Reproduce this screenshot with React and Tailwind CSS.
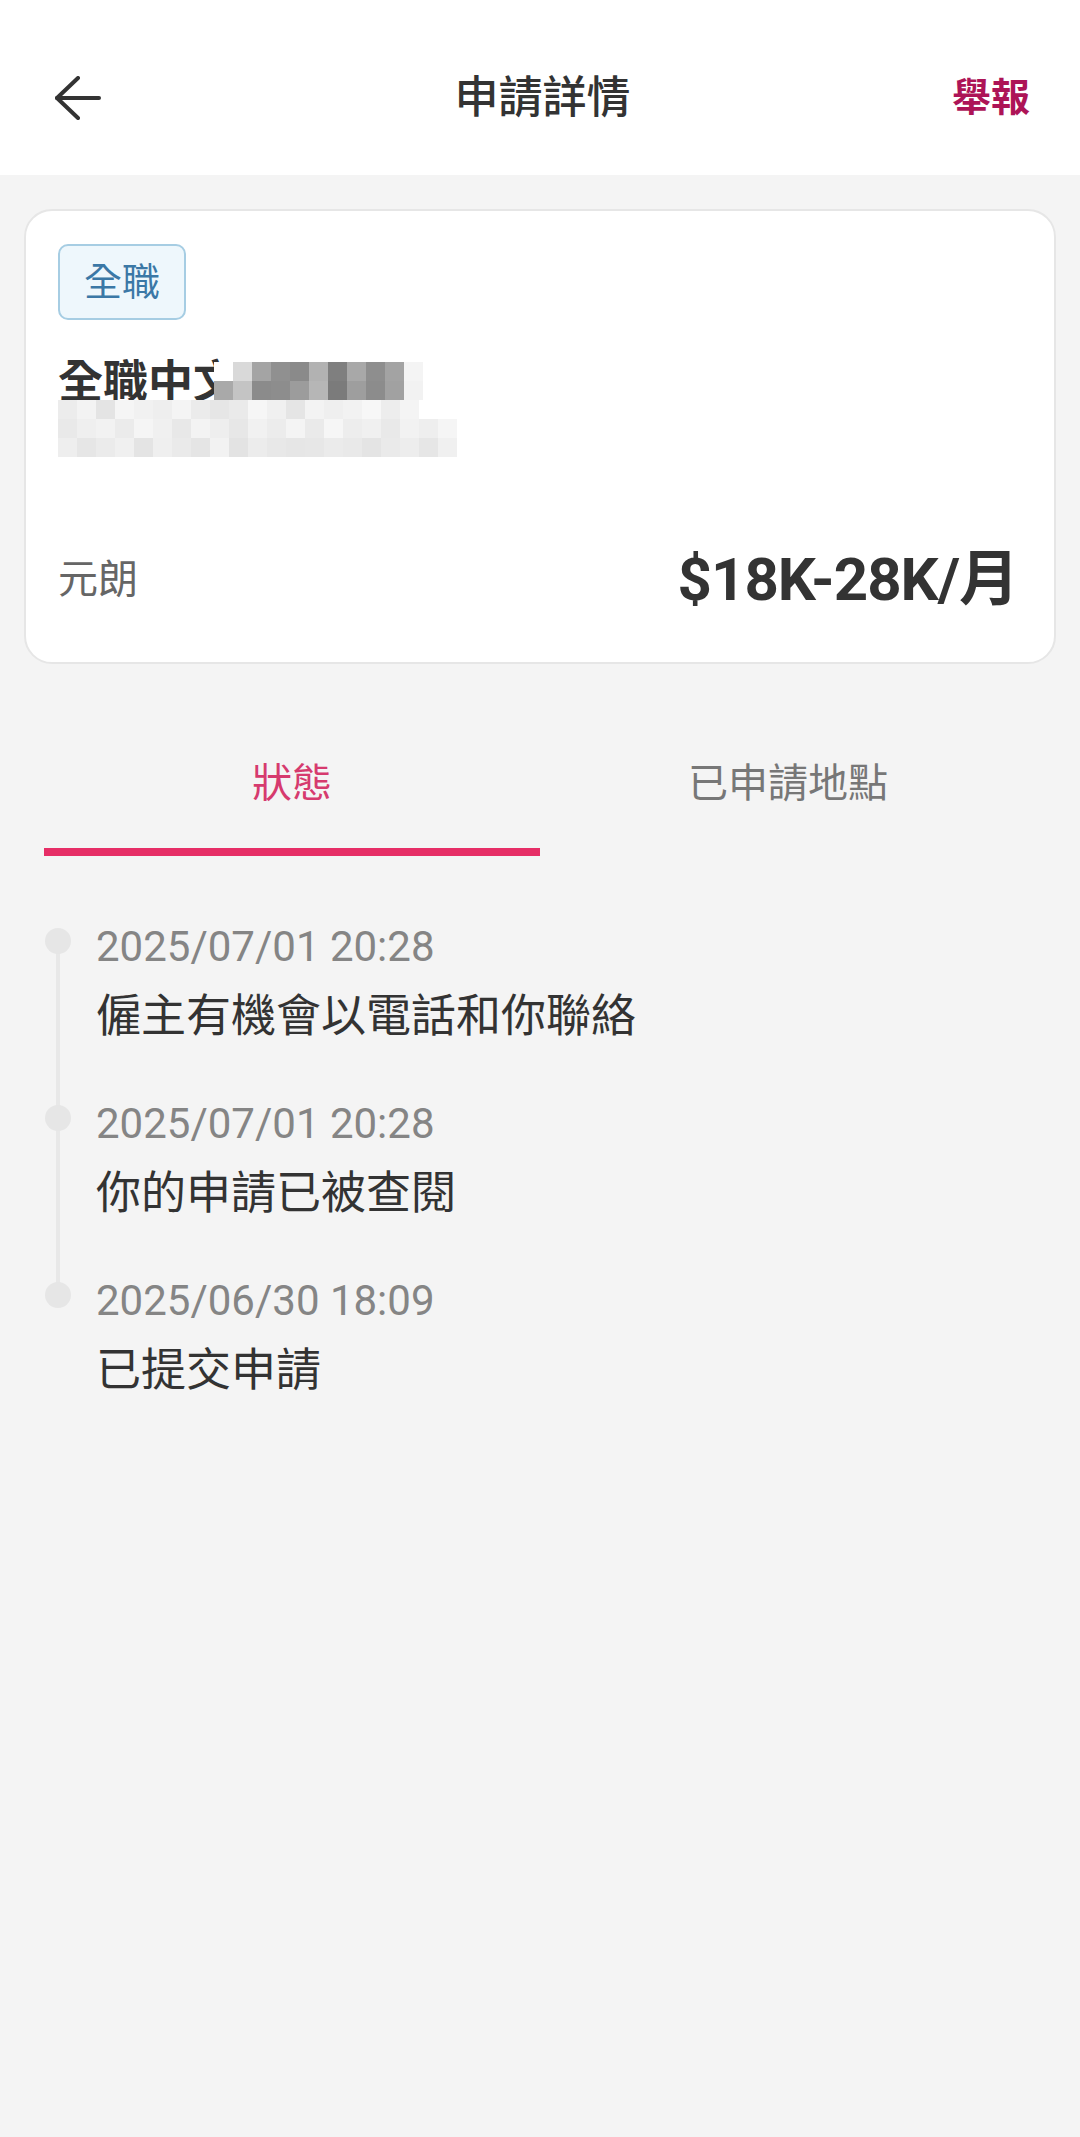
import React, { useState } from "react";

// 狀態時間線
const EVENTS = [
    { time: "2025/07/01 20:28", text: "僱主有機會以電話和你聯絡" },
    { time: "2025/07/01 20:28", text: "你的申請已被查閱" },
    { time: "2025/06/30 18:09", text: "已提交申請" },
];

// 打格仔 (mosaic) shades
const TOP_ROWS = [
    ["bg-white", "bg-[#d9d9d9]", "bg-[#a4a4a4]", "bg-[#909090]", "bg-[#8a8a8a]", "bg-[#b2b2b2]", "bg-[#7f7f7f]", "bg-[#a8a8a8]", "bg-[#8e8e8e]", "bg-[#a3a3a3]", "bg-[#f4f4f4]"],
    ["bg-[#a9a9a9]", "bg-[#c4c4c4]", "bg-[#8b8b8b]", "bg-[#8d8d8d]", "bg-[#9c9c9c]", "bg-[#b6b6b6]", "bg-[#7b7b7b]", "bg-[#9e9e9e]", "bg-[#8c8c8c]", "bg-[#a1a1a1]", "bg-[#f2f2f2]"],
];
const BOTTOM_ROWS = [
    ["bg-[#ececec]", "bg-[#f3f3f3]", "bg-[#e4e4e4]", "bg-[#f5f5f5]", "bg-[#f1f1f1]", "bg-[#eeeeee]", "bg-[#f4f4f4]", "bg-[#ebebeb]", "bg-[#e6e6e6]", "bg-[#eaeaea]", "bg-[#f6f6f6]", "bg-[#f0f0f0]", "bg-[#e5e5e5]", "bg-[#f3f3f3]", "bg-[#efefef]", "bg-[#f2f2f2]", "bg-[#f7f7f7]", "bg-[#ededed]", "bg-[#f4f4f4]", "bg-white", "bg-white"],
    ["bg-[#e9e9e9]", "bg-[#efefef]", "bg-[#f2f2f2]", "bg-[#ebebeb]", "bg-[#f5f5f5]", "bg-[#f0f0f0]", "bg-[#e8e8e8]", "bg-[#f3f3f3]", "bg-[#eeeeee]", "bg-[#e7e7e7]", "bg-[#f1f1f1]", "bg-[#ececec]", "bg-[#f4f4f4]", "bg-[#eaeaea]", "bg-[#f6f6f6]", "bg-[#ededed]", "bg-[#f0f0f0]", "bg-[#e9e9e9]", "bg-[#f2f2f2]", "bg-[#eeeeee]", "bg-[#f5f5f5]"],
    ["bg-[#eeeeee]", "bg-[#e6e6e6]", "bg-[#ebebeb]", "bg-[#f0f0f0]", "bg-[#e4e4e4]", "bg-[#efefef]", "bg-[#eaeaea]", "bg-[#e5e5e5]", "bg-[#f2f2f2]", "bg-[#e3e3e3]", "bg-[#ececec]", "bg-[#e8e8e8]", "bg-[#e6e6e6]", "bg-[#e7e7e7]", "bg-[#ebebeb]", "bg-[#e9e9e9]", "bg-[#e4e4e4]", "bg-[#eaeaea]", "bg-[#ededed]", "bg-[#e6e6e6]", "bg-[#f0f0f0]"],
];

function Mosaic({ rows, className }) {
    return (
        <div className={className}>
            {rows.map((row, r) => (
                <div key={r} className="flex">
                    {row.map((c, i) => <div key={i} className={`h-[19px] w-[19px] ${c}`}/>)}
                </div>
            ))}
        </div>
    );
}

export default function App() {
    const [tab, setTab] = useState(0);

    return (
        <div className="min-h-screen bg-[#f4f4f4] font-[Roboto,'Noto_Sans_CJK_TC',sans-serif] text-[#333333]">
            {/* Header */}
            <div className="flex h-[175px] items-center bg-white pl-[55px] pr-[50px] pt-[20px]">
                <div className="w-[200px]">
                    <button className="flex h-[46px] w-[46px] items-center">
                        <svg width="46" height="44" viewBox="0 0 46 44" fill="none" stroke="#333333" strokeWidth="4" strokeLinecap="round" strokeLinejoin="round">
                            <path d="M23 2 L2 22 L23 42"/>
                            <path d="M2 22 H44"/>
                        </svg>
                    </button>
                </div>
                <h1 className="flex-1 text-center text-[44px] font-medium leading-[56px] text-[#333333]">申請詳情</h1>
                <div className="flex w-[200px] justify-end">
                    <button className="text-[39px] font-bold leading-[56px] text-[#ad1457]">舉報</button>
                </div>
            </div>

            {/* Job card */}
            <div className="mx-[24px] mt-[34px] rounded-[28px] border-2 border-[#e6e6e6] bg-white pb-[50px] pl-[32px] pr-[36px] pt-[33px]">
                <div className="flex h-[76px] w-[128px] items-center justify-center rounded-[10px] border-2 border-[#a6cde3] bg-[#eef7fc] text-[38px] text-[#3b78a6]">全職</div>
                <div className="relative mt-[37px] h-[104px]">
                    <div className="text-[45px] font-bold leading-[52px] text-[#333333]">全職中文</div>
                    <Mosaic rows={TOP_ROWS} className="absolute left-[156px] top-[5px]"/>
                    <Mosaic rows={BOTTOM_ROWS} className="absolute left-[0px] top-[43px]"/>
                </div>
                <div className="mt-[87px] flex items-center justify-between">
                    <span className="text-[40px] leading-[64px] text-[#666666]">元朗</span>
                    <span className="text-[60px] font-bold leading-[64px] tracking-[-1px] text-[#333333]">$18K-28K/月</span>
                </div>
            </div>

            {/* Tabs */}
            <div className="mx-[44px] mt-[92px] flex">
                {["狀態", "已申請地點"].map((t, i) => (
                    <button key={t} onClick={() => setTab(i)} className="flex w-1/2 flex-col items-center">
                        <span className={`text-[40px] leading-[56px] ${tab === i ? "text-[#d63a6e]" : "text-[#777777]"}`}>{t}</span>
                        <span className={`mt-[36px] h-[8px] w-full ${tab === i ? "bg-[#e62e66]" : "bg-transparent"}`}/>
                    </button>
                ))}
            </div>

            {/* Timeline */}
            <div className="pl-[45px] pt-[66px]">
                {EVENTS.map((e, i) => (
                    <div key={i} className="relative flex gap-[25px] pb-[52px]">
                        {i < EVENTS.length - 1 && <div className="absolute left-[11px] top-[19px] h-[177px] w-[4px] bg-[#e8e8e8]"/>}
                        <div className="relative mt-[6px] h-[26px] w-[26px] shrink-0 rounded-full bg-[#e6e6e6]"/>
                        <div>
                            <div className="text-[42px] leading-[50px] text-[#858585]">{e.time}</div>
                            <div className="mt-[15px] text-[45px] leading-[60px] text-[#333333]">{e.text}</div>
                        </div>
                    </div>
                ))}
            </div>
        </div>
    );
}
